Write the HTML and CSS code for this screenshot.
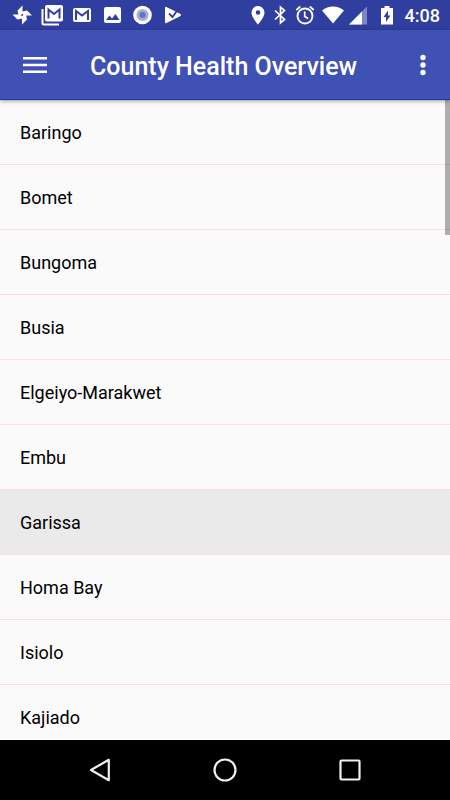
FILE: index.html
```html
<!DOCTYPE html>
<html lang="en">
<head>
<meta charset="utf-8">
<meta name="viewport" content="width=device-width, initial-scale=1">
<title>County Health Overview</title>
<link rel="stylesheet" href="styles.css">
</head>
<body>
<div class="status-bar">
  <div class="notifications">
    <svg class="icon" viewBox="0 0 22 22" aria-hidden="true"><path fill="#fff" d="M11.500 1.500V11H7.500L6.500 6.500zM21 11.500h-9.500V7.500L16 6.500zM11 20.500V11H15l1 4.500zM1.500 10.500H11V14.500L6.500 15.500z"/><circle cx="11.200" cy="11" r="1" fill="#303f9f"/></svg>
    <svg class="icon" viewBox="0 0 22 22" aria-hidden="true"><path fill="none" stroke="#fff" stroke-width="2" d="M1.500 5v14q0 1.500 1.500 1.500h15"/><rect x="4" y="1" width="18" height="16.500" rx="2" fill="#fff"/><path fill="none" stroke="#303f9f" stroke-width="2" d="M7.500 14.500V5.500L13 10l5.500-4.500v9"/></svg>
    <svg class="icon" viewBox="0 0 22 22" aria-hidden="true"><rect x="2" y="4" width="18" height="14" rx="2" fill="#fff"/><path fill="none" stroke="#303f9f" stroke-width="2" d="M5 16V7l6 4.500L17 7v9"/></svg>
    <svg class="icon" viewBox="0 0 22 22" aria-hidden="true"><rect x="3" y="3" width="17" height="16" rx="2" fill="#fff"/><path fill="#303f9f" d="M5 16l3.500-4.500 2.500 3 3.500-4.500 4 6z"/></svg>
    <svg class="icon" viewBox="0 0 22 22" aria-hidden="true"><circle cx="11.500" cy="11" r="9.300" fill="#fff"/><circle cx="11.500" cy="11" r="6" fill="#a3abd7"/><circle cx="11.500" cy="11" r="3" fill="#6673b8"/></svg>
    <svg class="icon" viewBox="0 0 22 22" aria-hidden="true"><path fill="#fff" d="M4 3.500q0-1 1.500-.5l14 7q1 1 0 2L5 19.300q-1 .2-1-1z"/><path fill="none" stroke="#303f9f" stroke-width="1.800" d="M8 9.500l3.500 3.500 5.500-7.500"/></svg>
  </div>
  <div class="system">
    <svg class="glyph" viewBox="0 0 22 22" aria-hidden="true"><path fill="#fff" fill-rule="evenodd" d="M11 2a6.500 6.500 0 0 0-6.500 6.500C4.500 13.300 11 20.500 11 20.500s6.500-7.200 6.500-12A6.500 6.500 0 0 0 11 2zm0 4.200a2.300 2.300 0 1 1 0 4.600 2.300 2.300 0 0 1 0-4.600z"/></svg>
    <svg class="glyph" viewBox="0 0 22 22" aria-hidden="true"><path fill="none" stroke="#fff" stroke-width="1.700" d="M6 6.500l9.500 9L11.500 19V3l4 3.500L6 15.500"/></svg>
    <svg class="glyph wide" viewBox="0 0 28 22" aria-hidden="true"><circle cx="14" cy="12" r="7.500" fill="none" stroke="#fff" stroke-width="1.900"/><path fill="none" stroke="#fff" stroke-width="1.700" d="M13.700 7.500v5l3.500 2M5.300 6l4-3.500M22.700 6l-4-3.500"/></svg>
    <svg class="glyph wide" viewBox="0 0 28 22" aria-hidden="true"><path fill="#fff" d="M14 19.500L3 6.500Q8 2.500 14 2.500t11 4z"/></svg>
    <svg class="glyph" viewBox="0 0 22 22" aria-hidden="true"><path fill="#7d87c3" d="M2 20.500L20 2.500v18z"/><path fill="#fff" d="M2 20.500L15 7.500v13z"/></svg>
    <svg class="glyph battery" viewBox="0 0 36 22" aria-hidden="true"><path fill="#fff" d="M15.500 2h5v2H24v16.500H12V4h3.500z"/><path fill="#303f9f" d="M19 6.500L14.500 13H17v5l4.500-6.500H19z"/></svg>
    <span class="clock">4:08</span>
  </div>
</div>
<header class="app-bar">
  <button class="bar-button" type="button" aria-label="Open menu"><svg class="menu-icon" viewBox="0 0 24 18" aria-hidden="true"><path stroke="#fff" stroke-width="2.500" d="M0 2.200h24M0 9h24M0 15.800h24"/></svg></button>
  <h1 class="title">County Health Overview</h1>
  <button class="bar-button more" type="button" aria-label="More options"><svg class="more-icon" viewBox="0 0 6 22" aria-hidden="true"><g fill="#fff"><circle cx="3" cy="3.500" r="2.700"/><circle cx="3" cy="11" r="2.700"/><circle cx="3" cy="18.500" r="2.700"/></g></svg></button>
</header>
<main class="content">
  <ul class="counties">
    <li><a class="county" href="#baringo">Baringo</a></li>
    <li><a class="county" href="#bomet">Bomet</a></li>
    <li><a class="county" href="#bungoma">Bungoma</a></li>
    <li><a class="county" href="#busia">Busia</a></li>
    <li><a class="county" href="#elgeiyo-marakwet">Elgeiyo-Marakwet</a></li>
    <li><a class="county" href="#embu">Embu</a></li>
    <li><a class="county pressed" href="#garissa">Garissa</a></li>
    <li><a class="county" href="#homa-bay">Homa Bay</a></li>
    <li><a class="county" href="#isiolo">Isiolo</a></li>
    <li><a class="county" href="#kajiado">Kajiado</a></li>
  </ul>
  <div class="scroll-thumb"></div>
</main>
<nav class="system-nav" aria-label="System navigation">
  <button class="nav-button" type="button" aria-label="Back"><svg class="nav-icon" viewBox="0 0 26 26" aria-hidden="true"><path fill="none" stroke="#f0f0f0" stroke-width="2.200" stroke-linejoin="round" d="M21.800 2.800v20.400L4 13z"/></svg></button>
  <button class="nav-button" type="button" aria-label="Home"><svg class="nav-icon" viewBox="0 0 26 26" aria-hidden="true"><circle cx="13" cy="13" r="10.500" fill="none" stroke="#f0f0f0" stroke-width="2.200"/></svg></button>
  <button class="nav-button" type="button" aria-label="Recent apps"><svg class="nav-icon" viewBox="0 0 26 26" aria-hidden="true"><rect x="3.500" y="3.500" width="19" height="19" rx="1" fill="none" stroke="#f0f0f0" stroke-width="2.200"/></svg></button>
</nav>
</body>
</html>
```
FILE: styles.css
```css
* {
  box-sizing: border-box;
}

body {
  margin: 0;
  min-height: 100vh;
  max-height: 100vh;
  display: flex;
  flex-direction: column;
  overflow: hidden;
  background: #fafafa;
  color: #000;
  font-family: Roboto, sans-serif;
}

button {
  padding: 0;
  border: 0;
  background: none;
  display: flex;
  align-items: center;
  justify-content: center;
}

svg {
  display: block;
}

.status-bar {
  flex: none;
  height: 30px;
  padding: 0 10px 0 11px;
  display: flex;
  justify-content: space-between;
  align-items: center;
  background: #303f9f;
}

.notifications {
  display: flex;
  gap: 8px;
}

.icon,
.glyph {
  width: 22px;
  height: 22px;
}

.glyph.wide {
  width: 28px;
}

.glyph.battery {
  width: 36px;
}

.system {
  display: flex;
  align-items: center;
}

.clock {
  padding-top: 2px;
  color: #fff;
  font-size: 18px;
  font-weight: 500;
  line-height: 28px;
}

.app-bar {
  flex: none;
  height: 70px;
  display: flex;
  align-items: center;
  background: #3f51b5;
  border-bottom: 1px solid #1a35a4;
  box-shadow: 0 1px 4px rgba(0, 0, 0, 0.4);
  position: relative;
  z-index: 1;
}

.bar-button {
  flex: none;
  width: 70px;
  height: 70px;
}

.bar-button.more {
  width: 55px;
}

.menu-icon {
  width: 24px;
  height: 18px;
}

.more-icon {
  width: 6px;
  height: 22px;
}

.title {
  flex: 1;
  margin: 0;
  padding: 4px 0 0 20px;
  color: #fff;
  font-size: 25px;
  font-weight: 500;
  line-height: 32px;
}

.content {
  flex: 1;
  min-height: 0;
  overflow: hidden;
  position: relative;
}

.counties {
  margin: 0;
  padding: 0;
  list-style: none;
}

.county {
  display: block;
  padding: 2px 20px 0;
  border-bottom: 1px solid #fadfdf;
  color: inherit;
  font-size: 18px;
  line-height: 62px;
  text-decoration: none;
}

.county.pressed {
  background: #eaeaea;
}

.scroll-thumb {
  position: absolute;
  top: 0;
  right: 0;
  width: 5px;
  height: 135px;
  background: rgba(0, 0, 0, 0.3);
}

.system-nav {
  flex: none;
  height: 60px;
  padding: 0 38px;
  display: flex;
  background: #000;
}

.nav-button {
  flex: 1;
}

.nav-icon {
  width: 26px;
  height: 26px;
}
```
